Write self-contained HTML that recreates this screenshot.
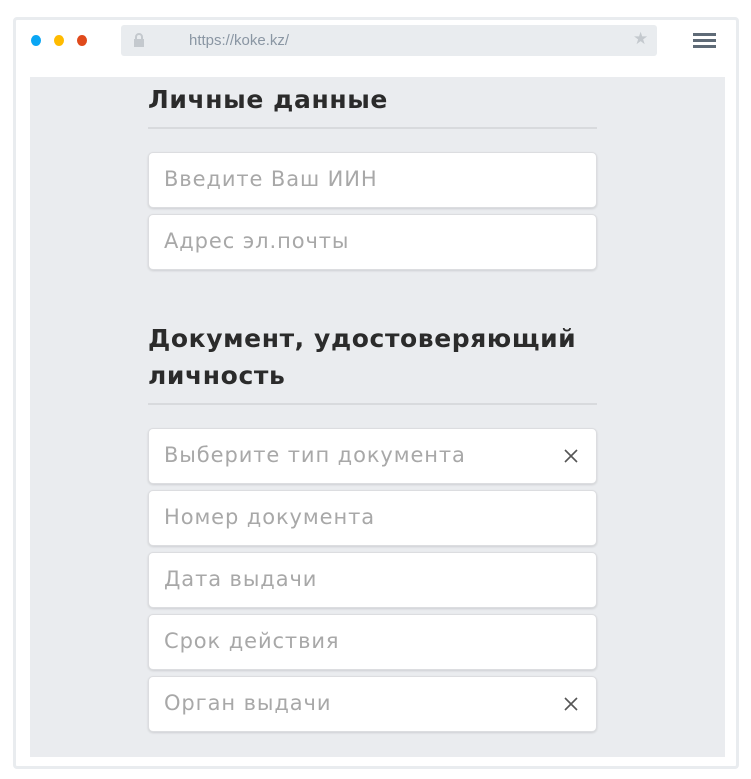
<!DOCTYPE html>
<html><head><meta charset="utf-8"><style>
*{box-sizing:border-box;margin:0;padding:0}
body{width:751px;height:779px;background:#fff;position:relative;font-family:"DejaVu Sans",sans-serif;overflow:hidden}
.frame{position:absolute;left:13px;top:17px;width:726px;height:752px;border:3px solid #e9ecef;border-radius:4px}
.dot{position:absolute;top:35px;width:10px;height:11px;border-radius:50%}
.url{position:absolute;left:121px;top:25px;width:536px;height:31px;background:#e9ecef;border-radius:3px}
.url span{position:absolute;left:68px;top:7px;font-size:15px;color:#8a96a3;font-family:"Liberation Sans",sans-serif}
.ham{position:absolute;left:693px;width:23px;height:3px;background:#5f6b77}
.content{position:absolute;left:30px;top:77px;width:695px;height:680px;background:#eaecef}
h2{position:absolute;left:148px;font-size:25px;font-weight:bold;color:#2b2b2b;line-height:37px;letter-spacing:0.6px}
.hr{position:absolute;left:148px;width:449px;height:2px;background:#d8dadd}
.in{position:absolute;left:148px;width:449px;height:56px;background:#fff;border:1px solid #dcdde0;border-radius:5px;box-shadow:0 1px 2px rgba(0,0,0,.12);font-size:21px;color:#a8a8a8;padding:14px 0 0 15px;letter-spacing:0.9px}
.x{position:absolute;right:18px;top:20px}
</style></head><body>
<div class="frame"></div>
<div class="dot" style="left:31px;background:#0aa6f4"></div>
<div class="dot" style="left:54px;background:#ffbb00"></div>
<div class="dot" style="left:77px;background:#e04a1b"></div>
<div class="url">
<svg style="position:absolute;left:12px;top:8px" width="12" height="14" viewBox="0 0 12 14"><rect x="1" y="6" width="10" height="8" fill="#c4c9ce"/><path d="M3 6V4a3 3 0 0 1 6 0v2" stroke="#c4c9ce" stroke-width="2" fill="none"/></svg>
<span>https://koke.kz/</span>
<div style="position:absolute;left:512px;top:4px;color:#c4c9ce;font-size:17px">★</div>
</div>
<div class="ham" style="top:33px"></div><div class="ham" style="top:39px"></div><div class="ham" style="top:45px"></div>
<div class="content"></div>
<h2 style="top:81px">Личные данные</h2>
<div class="hr" style="top:127px"></div>
<div class="in" style="top:152px">Введите Ваш ИИН</div>
<div class="in" style="top:214px">Адрес эл.почты</div>
<h2 style="top:320px">Документ, удостоверяющий<br>личность</h2>
<div class="hr" style="top:403px"></div>
<div class="in" style="top:428px">Выберите тип документа<svg class="x" width="14" height="14" viewBox="0 0 14 14"><path d="M1 1L13 13M13 1L1 13" stroke="#555" stroke-width="1.6"/></svg></div>
<div class="in" style="top:490px">Номер документа</div>
<div class="in" style="top:552px">Дата выдачи</div>
<div class="in" style="top:614px">Срок действия</div>
<div class="in" style="top:676px">Орган выдачи<svg class="x" width="14" height="14" viewBox="0 0 14 14"><path d="M1 1L13 13M13 1L1 13" stroke="#555" stroke-width="1.6"/></svg></div>
</body></html>
